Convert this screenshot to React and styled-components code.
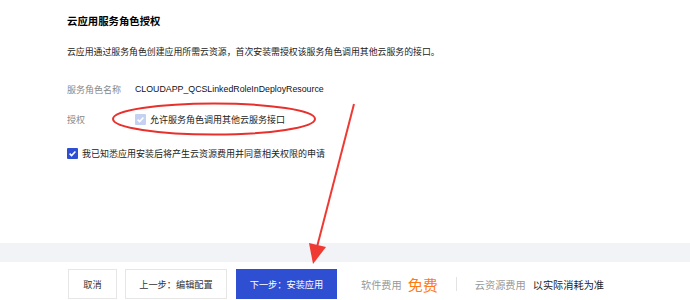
import React from 'react';
import styled, { createGlobalStyle } from 'styled-components';

const GlobalStyle = createGlobalStyle`
  html, body {
    margin: 0;
    padding: 0;
    background: #fff;
  }
  body {
    font-family: "Liberation Sans", "Noto Sans CJK SC", sans-serif;
    color: #333;
  }
`;

const Page = styled.div`
  position: relative;
  width: 690px;
  height: 300px;
  overflow: hidden;
  display: flex;
  flex-direction: column;
`;

const Content = styled.div`
  height: 243px;
  box-sizing: border-box;
  padding: 14px 0 0 67px;
  display: flex;
  flex-direction: column;
`;

const Title = styled.h2`
  margin: 0;
  font-size: 10.4px;
  line-height: 16px;
  font-weight: bold;
  color: #000;
`;

const Desc = styled.p`
  margin: 15px 0 0;
  font-size: 8.9px;
  line-height: 14px;
  color: #222;
`;

const Row = styled.div`
  display: flex;
  align-items: center;
  height: 14px;
  margin-top: ${p => p.gap}px;
`;

const Label = styled.span`
  width: 68px;
  font-size: 9px;
  color: #888;
`;

const Value = styled.span`
  font-size: 8.8px;
  color: #111;
`;

const CheckLine = styled.label`
  display: flex;
  align-items: center;
  gap: 4px;
  font-size: 9px;
  color: #222;
`;

const Box = styled.span`
  width: 11px;
  height: 11px;
  border-radius: 1px;
  display: flex;
  align-items: center;
  justify-content: center;
  background: ${p => (p.disabled ? '#c5d1f1' : '#2f4fd3')};
`;

const Band = styled.div`
  height: 19px;
  background: #f2f3f6;
`;

const Footer = styled.div`
  flex: 1;
  display: flex;
  align-items: flex-start;
  padding: 7px 0 0 68px;
`;

const Button = styled.button`
  height: 30px;
  width: ${p => p.w}px;
  margin-right: ${p => p.mr}px;
  padding: 0;
  border: 1px solid ${p => (p.primary ? '#2f4fd3' : '#e6e6e6')};
  background: ${p => (p.primary ? '#2f4fd3' : '#fff')};
  color: ${p => (p.primary ? '#fff' : '#333')};
  font-family: "Liberation Sans", "Noto Sans CJK SC", sans-serif;
  font-size: 9.2px;
  cursor: pointer;
`;

const Fee = styled.div`
  height: 30px;
  display: flex;
  align-items: center;
  margin-left: 24px;
`;

const FeeLabel = styled.span`
  font-size: 10.2px;
  color: #999;
  margin-right: ${p => p.mr}px;
`;

const Free = styled.span`
  font-size: 15px;
  color: #ff7a10;
`;

const FeeValue = styled.span`
  font-size: 10.2px;
  color: #222;
`;

const Divider = styled.span`
  width: 1px;
  height: 14px;
  background: #e3e3e3;
  margin: 0 18px 0 18px;
`;

const Marks = styled.svg`
  position: absolute;
  left: 0;
  top: 0;
  pointer-events: none;
`;

const Check = () => (
  <svg width="9" height="9" viewBox="0 0 9 9">
    <polyline points="1.6,4.6 3.6,6.6 7.4,2.4" fill="none" stroke="#fff" strokeWidth="1.5" />
  </svg>
);

export default function App() {
  return (
    <Page>
      <GlobalStyle />
      <Content>
        <Title>云应用服务角色授权</Title>
        <Desc>云应用通过服务角色创建应用所需云资源，首次安装需授权该服务角色调用其他云服务的接口。</Desc>
        <Row gap={23}>
          <Label>服务角色名称</Label>
          <Value>CLOUDAPP_QCSLinkedRoleInDeployResource</Value>
        </Row>
        <Row gap={16}>
          <Label>授权</Label>
          <CheckLine>
            <Box disabled><Check /></Box>
            允许服务角色调用其他云服务接口
          </CheckLine>
        </Row>
        <Row gap={20}>
          <CheckLine>
            <Box><Check /></Box>
            我已知悉应用安装后将产生云资源费用并同意相关权限的申请
          </CheckLine>
        </Row>
      </Content>
      <Band />
      <Footer>
        <Button w={49} mr={8}>取消</Button>
        <Button w={102} mr={9}>上一步：编辑配置</Button>
        <Button primary w={101} mr={0}>下一步：安装应用</Button>
        <Fee>
          <FeeLabel mr={6}>软件费用</FeeLabel>
          <Free>免费</Free>
          <Divider />
          <FeeLabel mr={7}>云资源费用</FeeLabel>
          <FeeValue>以实际消耗为准</FeeValue>
        </Fee>
      </Footer>
      <Marks width="690" height="300" viewBox="0 0 690 300">
        <ellipse cx="214" cy="119" rx="101" ry="15.5" fill="none" stroke="#e8302c" strokeWidth="2" />
        <line x1="354" y1="104" x2="317" y2="247" stroke="#ee3a33" strokeWidth="2" />
        <polygon points="309,243 326,247 313,264" fill="#ee3a33" />
      </Marks>
    </Page>
  );
}
